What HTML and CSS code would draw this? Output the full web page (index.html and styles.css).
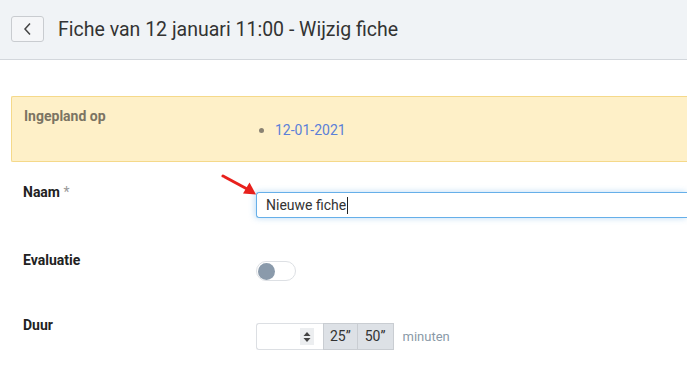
FILE: index.html
```html
<!DOCTYPE html>
<html lang="nl">
<head>
    <meta charset="UTF-8">
    <title>Wijzig fiche</title>
    <link rel="stylesheet" href="styles.css">
</head>
<body>
<div class="topbar">
    <span class="back-btn">
        <svg width="10" height="14" viewBox="0 0 10 14"><path d="M7 1.5 L2 7 L7 12.5" fill="none" stroke="#444" stroke-width="1.5"/></svg>
    </span>
    <h1 class="title">Fiche van 12 januari 11:00 - Wijzig fiche</h1>
</div>

<div class="page">
    <div class="planned">
        <div class="planned-label">Ingepland op</div>
        <ul class="planned-dates">
            <li>12-01-2021</li>
        </ul>
    </div>

    <div class="field field-naam">
        <label class="field-label">Naam <span class="req">*</span></label>
        <div class="text-input">Nieuwe fiche<span class="caret"></span></div>
        <!--pijl-->
        <svg class="pointer" width="40" height="24" viewBox="0 0 40 24">
            <line x1="2" y1="2" x2="28" y2="16" stroke="#e8201c" stroke-width="3" stroke-linecap="round"/>
            <polygon points="35,20.5 22,19.5 28.5,8.5" fill="#e8201c"/>
        </svg>
    </div>

    <div class="field field-eval">
        <label class="field-label">Evaluatie</label>
        <span class="toggle"><span class="knob"></span></span>
    </div>

    <div class="field field-duur">
        <label class="field-label">Duur</label>
        <div class="duur">
            <span class="num-input">
                <span class="spin">
                    <svg width="8" height="12" viewBox="0 0 8 12"><path d="M0.5 5 L4 1 L7.5 5 Z M0.5 7 L4 11 L7.5 7 Z" fill="#444"/></svg>
                </span>
            </span>
            <span class="preset">25”</span>
            <span class="preset">50”</span>
            <span class="unit">minuten</span>
        </div>
    </div>
</div>
</body>
</html>
```

FILE: styles.css
```css
* {
    padding: 0;
    margin: 0;
    list-style: none;
    box-sizing: border-box;
}

body {
    font-family: Roboto, "Liberation Sans", Arial, sans-serif;
    font-size: 14px;
    color: #333;
    background: #fff;
    overflow: hidden;
}

.topbar {
    height: 60px;
    background: #f0f3f6;
    border-bottom: 1px solid #d3d7dc;
    display: flex;
    align-items: center;
    padding-left: 11px;
    padding-bottom: 1px;
}

.back-btn {
    width: 33px;
    height: 26px;
    border: 1px solid #c9ccd0;
    border-radius: 3px;
    background: #f5f6f8;
    display: flex;
    align-items: center;
    justify-content: center;
}

.title {
    font-size: 19.5px;
    font-weight: 400;
    color: #333;
    margin-left: 14px;
}

.page {
    padding: 36px 0 0 11px;
}

.planned {
    height: 66px;
    background: #fef0c8;
    border: 1px solid #f5d98a;
    border-right: 0;
    border-radius: 2px 0 0 2px;
    display: flex;
    padding: 11px 0 0 12px;
}

.planned-label {
    width: 233px;
    font-weight: 700;
    color: #7b7463;
    line-height: 17px;
}

.planned-dates {
    margin-top: 14px;
    line-height: 17px;
}

.planned-dates li {
    color: #5b80d8;
    padding-left: 18px;
    position: relative;
}

.planned-dates li::before {
    content: "";
    position: absolute;
    left: 2px;
    top: 6px;
    width: 5px;
    height: 5px;
    border-radius: 50%;
    background: #8a8272;
}

.field {
    display: flex;
    align-items: flex-start;
    position: relative;
}

.field-label {
    width: 245px;
    padding-left: 12px;
    font-weight: 700;
    color: #222;
    line-height: 17px;
}

.req {
    font-weight: 400;
    color: #999;
}

.field-naam {
    margin-top: 22px;
    height: 68px;
}

.text-input {
    margin-top: 8px;
    flex: 1;
    height: 26px;
    border: 1px solid #66afe9;
    border-right: 0;
    border-radius: 3px 0 0 3px;
    box-shadow: -1px 0 6px rgba(102, 175, 233, 0.45);
    font-size: 14px;
    line-height: 24px;
    padding-left: 9px;
    color: #333;
}

.caret {
    display: inline-block;
    width: 1px;
    height: 17px;
    background: #222;
    vertical-align: -4px;
    margin-left: 1px;
}

.pointer {
    position: absolute;
    left: 210px;
    top: -10px;
}

.field-eval {
    height: 65px;
}

.toggle {
    margin-top: 9px;
    width: 40px;
    height: 20px;
    border: 1px solid #dde0e4;
    border-radius: 10px;
    background: #fff;
    display: flex;
    align-items: center;
    padding-left: 1px;
}

.knob {
    width: 17px;
    height: 17px;
    border-radius: 50%;
    background: #8a9aab;
}

.duur {
    margin-top: 6px;
    display: flex;
    align-items: center;
}

.num-input {
    width: 67px;
    height: 27px;
    border: 1px solid #dcdfe3;
    border-right: 0;
    border-radius: 3px 0 0 3px;
    background: #fff;
    display: flex;
    align-items: center;
    justify-content: flex-end;
    padding-right: 9px;
}

.spin {
    width: 14px;
    height: 17px;
    background: #eceef0;
    display: flex;
    align-items: center;
    justify-content: center;
}

.preset {
    height: 27px;
    padding: 0 6px;
    background: #dde1e6;
    border: 1px solid #c9cdd2;
    font-size: 14px;
    line-height: 25px;
    color: #333;
}

.preset + .preset {
    border-left: 0;
    padding: 0 7px;
}

.unit {
    margin-left: 9px;
    font-size: 13px;
    color: #8a9aa8;
}
```
